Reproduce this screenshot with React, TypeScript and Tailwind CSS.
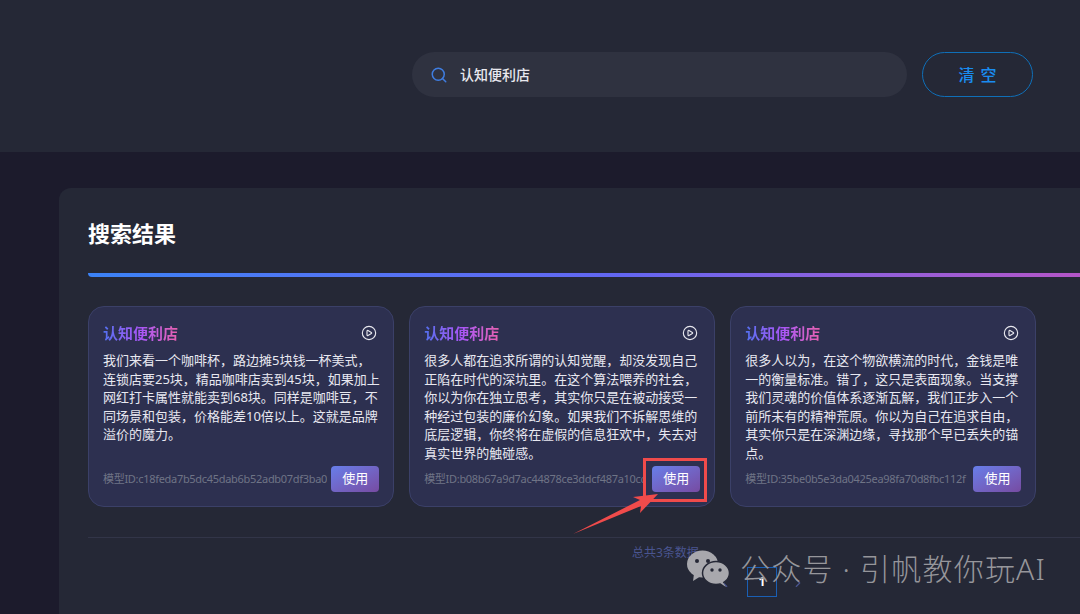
import { CirclePlay, Search, ChevronLeft, ChevronRight } from 'lucide-react';

const cards = [
  {
    text: '我们来看一个咖啡杯，路边摊5块钱一杯美式，连锁店要25块，精品咖啡店卖到45块，如果加上网红打卡属性就能卖到68块。同样是咖啡豆，不同场景和包装，价格能差10倍以上。这就是品牌溢价的魔力。',
    id: 'c18feda7b5dc45dab6b52adb07df3ba0',
  },
  {
    text: '很多人都在追求所谓的认知觉醒，却没发现自己正陷在时代的深坑里。在这个算法喂养的社会，你以为你在独立思考，其实你只是在被动接受一种经过包装的廉价幻象。如果我们不拆解思维的底层逻辑，你终将在虚假的信息狂欢中，失去对真实世界的触碰感。',
    id: 'b08b67a9d7ac44878ce3ddcf487a10cc',
  },
  {
    text: '很多人以为，在这个物欲横流的时代，金钱是唯一的衡量标准。错了，这只是表面现象。当支撑我们灵魂的价值体系逐渐瓦解，我们正步入一个前所未有的精神荒原。你以为自己在追求自由，其实你只是在深渊边缘，寻找那个早已丢失的锚点。',
    id: '35be0b5e3da0425ea98fa70d8fbc112f',
  },
];

function ResultCard({ text, id }: { text: string; id: string }) {
  return (
    <div className="flex h-[201px] flex-col rounded-[16px] border border-[#3b4068] bg-[#2d3050] px-[14px] pt-[16px] pb-[14px]">
      <div className="flex items-center justify-between pr-[2px]">
        <span className="bg-gradient-to-r from-[#4f6ff0] via-[#a855f7] to-[#e85fb0] bg-clip-text text-[15px] leading-[20px] font-bold text-transparent">
          认知便利店
        </span>
        <CirclePlay className="h-[16px] w-[16px] text-[#e8e8ee]" strokeWidth={1.7} />
      </div>
      <p className="mt-[8px] w-[277px] text-[13px] leading-[18.5px] text-[#e8e8f0]">{text}</p>
      <div className="mt-auto flex items-center gap-[4px]">
        <span className="min-w-0 flex-1 overflow-hidden text-[11px] tracking-[-0.3px] whitespace-nowrap text-[#6f7486]">
          模型ID:{id}
        </span>
        <button className="h-[26px] w-[48px] shrink-0 rounded-[4px] bg-gradient-to-br from-[#667eea] to-[#764ba2] text-[13px] text-white">
          使用
        </button>
      </div>
    </div>
  );
}

export default function App() {
  return (
    <div className="relative h-[614px] w-[1080px] overflow-hidden bg-[#1c1b2c] font-['Noto_Sans','Noto_Sans_CJK_SC',sans-serif]">
      {/* top search bar */}
      <header className="flex h-[152px] items-start justify-end gap-[15px] bg-[#252836] pt-[52px] pr-[47px]">
        <div className="flex h-[45px] w-[495px] items-center gap-[12px] rounded-full bg-[#2f3240] pl-[18px]">
          <Search className="h-[18px] w-[18px] text-[#3f7de0]" strokeWidth={2} />
          <span className="text-[14px] font-medium text-[#e8e8ee]">认知便利店</span>
        </div>
        <button className="h-[45px] w-[111px] rounded-full border border-[#0f6fb8] pl-[6px] text-[16px] font-medium tracking-[6px] text-[#1a8cf0]">
          清空
        </button>
      </header>

      {/* results panel */}
      <main className="mt-[36px] ml-[59px] h-[500px] w-[1100px] rounded-[12px] bg-[#252836] pt-[29px] pl-[29px]">
        <h2 className="text-[22px] leading-[32px] font-bold text-white">搜索结果</h2>
        <div className="mt-[24px] h-[4px] rounded-bl-[6px] bg-gradient-to-r from-[#3b82f6] via-[#6366f1] to-[#c04fc0]" />
        <div className="mt-[29px] grid w-[948.5px] grid-cols-3 gap-[15px]">
          {cards.map((card) => (
            <ResultCard key={card.id} text={card.text} id={card.id} />
          ))}
        </div>
        <div className="mt-[30px] border-t border-[#323548]" />
        <div className="mt-[7px] flex items-start text-[12px] leading-[16px] text-[#4a5590]">
          <span className="ml-[544px]">总共3条数据</span>
          <ChevronLeft className="mt-[31px] ml-[19px] h-[14px] w-[14px] text-[#4a5590]" />
          <span className="mt-[22px] ml-[15px] flex h-[30px] w-[30px] items-center justify-center border border-[#1a5fb4] font-bold text-white">
            1
          </span>
          <ChevronRight className="mt-[31px] ml-[14px] h-[14px] w-[14px] text-[#4a5590]" />
        </div>
      </main>

      {/* red annotation over the second card */}
      <div className="absolute top-[458px] left-[643px] h-[44px] w-[64px] border-[3px] border-[#f04b4b]" />
      <svg className="absolute top-0 left-0" width="1080" height="614" viewBox="0 0 1080 614">
        <polygon points="573,534 640,500 633,497 658,494 640,513 641,506" fill="#f04b4b" />
      </svg>

      {/* wechat watermark */}
      <div className="absolute top-[547px] left-[687px] flex items-center gap-[10px] text-[30px] leading-[44px] font-light tracking-[1.2px] whitespace-nowrap text-[#96969b]">
        <svg width="43" height="38" viewBox="0 0 43 38">
          <ellipse cx="15.5" cy="14" rx="15.5" ry="13.5" fill="#a8a8ad" />
          <polygon points="7,24 6,31 14,26" fill="#a8a8ad" />
          <circle cx="10" cy="11" r="2" fill="#252836" />
          <circle cx="21" cy="11" r="2" fill="#252836" />
          <ellipse cx="29" cy="23" rx="13.5" ry="11.5" fill="#a8a8ad" stroke="#252836" strokeWidth="1.5" />
          <polygon points="35,31 39,37 33,33" fill="#a8a8ad" />
          <circle cx="25" cy="20" r="1.7" fill="#252836" />
          <circle cx="33" cy="20" r="1.7" fill="#252836" />
        </svg>
        <span>公众号 · 引帆教你玩AI</span>
      </div>
    </div>
  );
}
